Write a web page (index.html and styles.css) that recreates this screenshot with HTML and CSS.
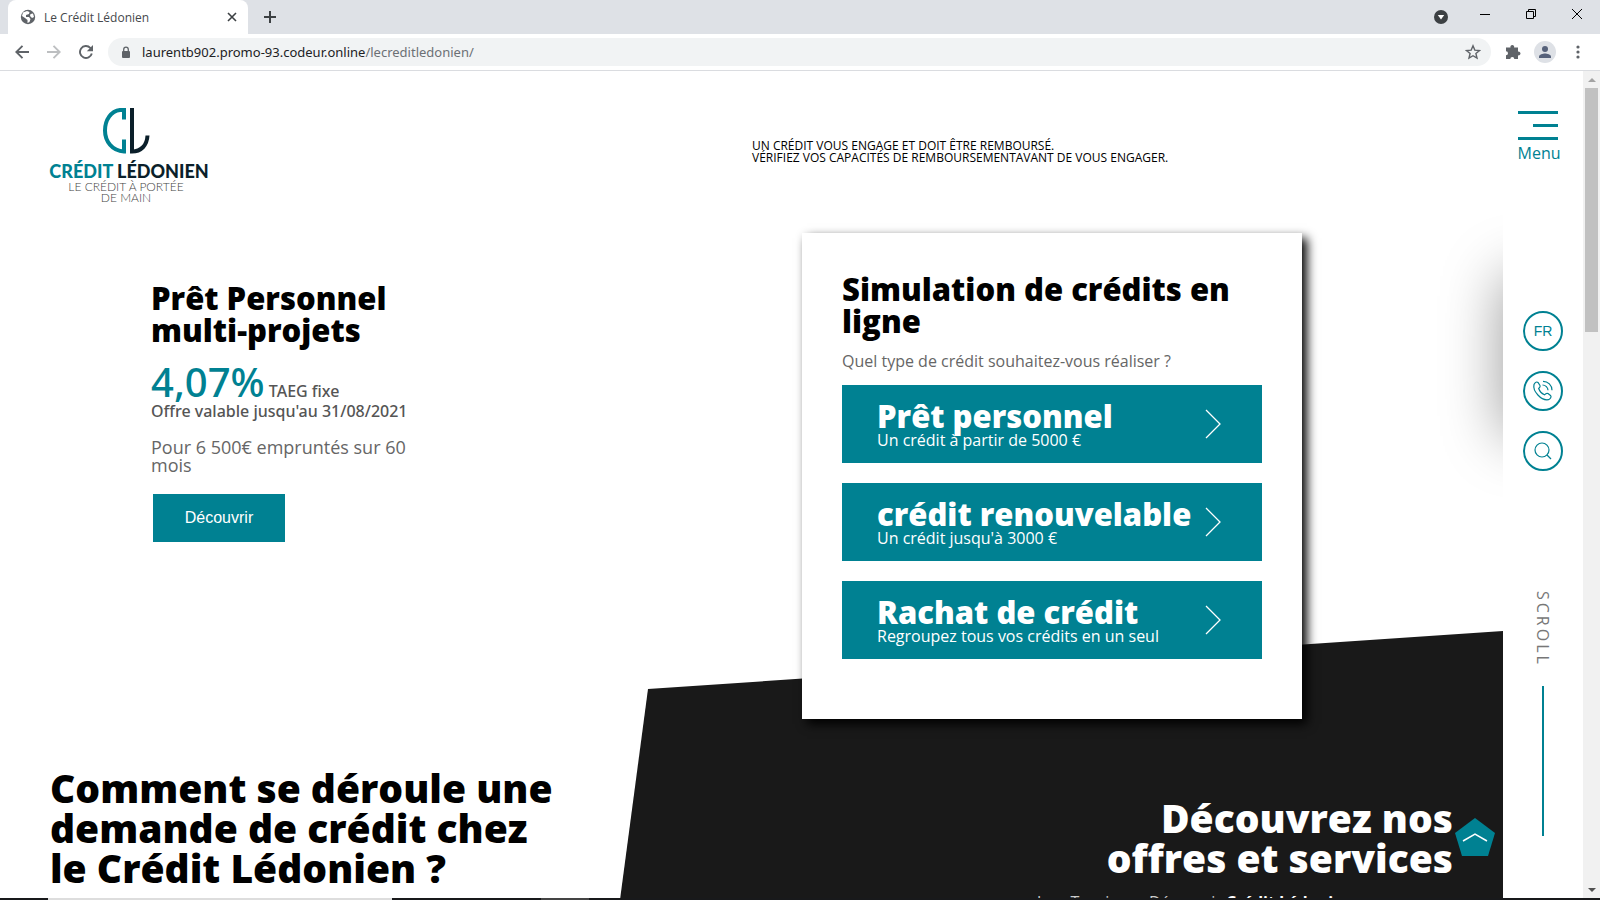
FILE: index.html
```html
<!DOCTYPE html>
<html lang="fr">
<head>
<meta charset="utf-8">
<title>Le Crédit Lédonien</title>
<link rel="stylesheet" href="styles.css">
</head>
<body>
<div class="browser">
  <header class="tabs">
    <div class="tab">
      <svg class="globe" viewBox="0 0 16 16"><circle cx="8" cy="8" r="7.2" fill="#5f6368"/><path d="M3 3.500 7 2l2.500 1-.5 2-3 1v2l3 0 1.500 2-1 3-2 1v-3L5 9 2 7z" fill="#fff"/><path d="M10.500 5l2.500-.5 1 3.500-2 1-2-2z" fill="#fff"/></svg>
      <span class="tab-title">Le Crédit Lédonien</span>
      <button class="plain" aria-label="Fermer l'onglet"><svg width="10" height="10" viewBox="0 0 10 10"><path d="M1 1l8 8M9 1l-8 8" stroke="#3c4043" stroke-width="1.600"/></svg></button>
    </div>
    <button class="plain new-tab" aria-label="Nouvel onglet"><svg width="12" height="12" viewBox="0 0 12 12"><path d="M6 0v12M0 6h12" stroke="#3c4043" stroke-width="2"/></svg></button>
    <div class="window-buttons">
      <button class="plain" aria-label="Rechercher les onglets"><svg width="14" height="14" viewBox="0 0 14 14"><circle cx="7" cy="7" r="7" fill="#3c4043"/><path d="M3.800 5h6.400L7 9.500z" fill="#fff"/></svg></button>
      <button class="plain" aria-label="Réduire"><svg width="10" height="10" viewBox="0 0 10 10"><path d="M0 5.500h10" stroke="#000"/></svg></button>
      <button class="plain" aria-label="Restaurer"><svg width="10" height="10" viewBox="0 0 10 10" fill="none" stroke="#000"><path d="M.5 2.500h7v7h-7zM2.500 2.500v-2h7v7h-2"/></svg></button>
      <button class="plain" aria-label="Fermer"><svg width="10" height="10" viewBox="0 0 10 10"><path d="M0 0l10 10M10 0L0 10" stroke="#000"/></svg></button>
    </div>
  </header>
  <div class="toolbar">
    <button class="plain" aria-label="Retour"><svg width="14" height="14" viewBox="0 0 14 14" fill="none" stroke="#5f6368" stroke-width="1.900"><path d="M14 7H1.500M7.500.8 1.300 7l6.200 6.200"/></svg></button>
    <button class="plain" aria-label="Avancer"><svg width="14" height="14" viewBox="0 0 14 14" fill="none" stroke="#bdbfc1" stroke-width="1.900"><path d="M0 7h12.500M6.500.8 12.700 7l-6.200 6.200"/></svg></button>
    <button class="plain" aria-label="Actualiser"><svg width="14" height="14" viewBox="0 0 14 14"><path d="M12.800 8.500A6 6 0 1 1 11.300 2.800l1 1" fill="none" stroke="#5f6368" stroke-width="1.900"/><path d="M14 0v6.200H7.800z" fill="#5f6368"/></svg></button>
    <div class="address">
      <svg width="10" height="13" viewBox="0 0 10 13"><rect x="1" y="5" width="8" height="7" rx="1" fill="#5f6368"/><path d="M2.700 6V3.500a2.300 2.300 0 0 1 4.600 0V6" fill="none" stroke="#5f6368" stroke-width="1.300"/></svg>
      <span class="url">laurentb902.promo-93.codeur.online<span class="path">/lecreditledonien/</span></span>
      <button class="plain" aria-label="Ajouter aux favoris"><svg width="16" height="16" viewBox="0 0 16 16"><path d="M8 1.800l1.800 4.300 4.700.4-3.600 3 1.100 4.600L8 11.700l-4 2.400 1.100-4.600-3.600-3 4.700-.4z" fill="none" stroke="#5f6368" stroke-width="1.400"/></svg></button>
    </div>
    <button class="plain" aria-label="Extensions"><svg width="16" height="16" viewBox="0 0 16 16"><path d="M1 3.500h4.500a1.900 1.900 0 1 1 3.600 0H13v4.200a1.900 1.900 0 1 1 0 3.600V15H9.300a2 2 0 0 0-4 0H1v-3.700a2 2 0 0 0 0-4z" fill="#5f6368"/></svg></button>
    <button class="plain avatar" aria-label="Profil"><svg width="22" height="22" viewBox="0 0 22 22"><circle cx="11" cy="11" r="11" fill="#dee1e6"/><circle cx="11" cy="8" r="3" fill="#56617a"/><path d="M5 17v-1.500c0-2 4-3 6-3s6 1 6 3V17z" fill="#56617a"/></svg></button>
    <button class="plain" aria-label="Menu du navigateur"><svg width="4" height="14" viewBox="0 0 4 14" fill="#5f6368"><circle cx="2" cy="2" r="1.600"/><circle cx="2" cy="7" r="1.600"/><circle cx="2" cy="12" r="1.600"/></svg></button>
  </div>
  <div class="viewport">
    <main class="page">
      <div class="top">
        <a class="logo" href="#" aria-label="Crédit Lédonien">
          <svg width="48" height="46" viewBox="0 0 48 46" fill="none" stroke-width="4"><path d="M22 11.500V2H18C9 3 3 12 3 22.500S10 43 22 43.500V31.500" stroke="#008192"/><path d="M30 0v43.500c9 0 15-6 15.500-16" stroke="#0b1f2a"/></svg>
          <span class="logo-name"><span class="teal">CRÉDIT</span> LÉDONIEN</span>
          <span class="logo-tag">LE CRÉDIT À PORTÉE<br>DE MAIN</span>
        </a>
        <p class="legal">UN CRÉDIT VOUS ENGAGE ET DOIT ÊTRE REMBOURSÉ.<br>VÉRIFIEZ VOS CAPACITÉS DE REMBOURSEMENTAVANT DE VOUS ENGAGER.</p>
      </div>
      <div class="hero">
        <section class="offer">
          <h2>Prêt Personnel<br>multi-projets</h2>
          <p class="rate"><span class="percent">4,07%</span> TAEG fixe<br>Offre valable jusqu'au 31/08/2021</p>
          <p class="amount">Pour 6 500€ empruntés sur 60 mois</p>
          <button class="discover">Découvrir</button>
        </section>
        <section class="card">
          <h2>Simulation de crédits en ligne</h2>
          <p class="question">Quel type de crédit souhaitez-vous réaliser ?</p>
          <div class="choices">
            <a class="choice" href="#"><span><strong>Prêt personnel</strong>Un crédit à partir de 5000 €</span><svg width="16" height="30" viewBox="0 0 16 30"><path d="M1 1l14 14L1 29"/></svg></a>
            <a class="choice" href="#"><span><strong>crédit renouvelable</strong>Un crédit jusqu'à 3000 €</span><svg width="16" height="30" viewBox="0 0 16 30"><path d="M1 1l14 14L1 29"/></svg></a>
            <a class="choice" href="#"><span><strong>Rachat de crédit</strong>Regroupez tous vos crédits en un seul</span><svg width="16" height="30" viewBox="0 0 16 30"><path d="M1 1l14 14L1 29"/></svg></a>
          </div>
        </section>
      </div>
      <div class="below">
        <h1>Comment se déroule une<br>demande de crédit chez<br>le Crédit Lédonien ?</h1>
        <section class="services">
          <h1>Découvrez nos<br>offres et services</h1>
          <p>Jura Tourisme, Découvrir <b>Crédit Lédonien</b></p>
        </section>
      </div>
      <a class="to-top" href="#" aria-label="Haut de page"><svg width="40" height="40" viewBox="0 0 40 40"><path d="M20 0l20 15-7 23H7L0 15z" fill="#008192"/><path d="M8 23l12-7 12 7" fill="none" stroke="#fff" stroke-width="1.500"/></svg></a>
    </main>
    <aside class="rail">
      <button class="plain menu"><svg width="40" height="29" viewBox="0 0 40 29"><path d="M0 1.500h40M15 14.500h25M0 27.500h40" stroke="#008192" stroke-width="3"/></svg><span>Menu</span></button>
      <div class="rounds">
        <button class="round">FR</button>
        <button class="round" aria-label="Appeler"><svg width="22" height="22" viewBox="0 0 22 22"><path d="M2 4.500C3 2 5 1.500 6 2.500l2 3c.6 1-.2 2-1.300 3 .8 2.500 3 5 5.800 6.300 1.500-1.600 2.300-2 3.500-1.200l2.500 1.800c1.300 1.200 0 3.500-2 4.300C9 21 .5 11 2 4.500zM10.500 5c3 0 5.500 2.500 5.500 5.300M11 1.300c5 0 9 4 9 9"/></svg></button>
        <button class="round" aria-label="Rechercher"><svg width="18" height="18" viewBox="0 0 18 18"><circle cx="8" cy="8" r="7"/><path d="M13 13l4 4"/></svg></button>
      </div>
      <div class="scroll"><span>SCROLL</span><i></i></div>
    </aside>
    <div class="scrollbar"><i class="arrow up"></i><i class="thumb"></i><i class="arrow down"></i></div>
  </div>
  <div class="taskbar"><i class="active"></i><i class="open"></i></div>
</div>
</body>
</html>
```
FILE: styles.css
```css
* { box-sizing: border-box; }
html { height: 100%; }
body { margin: 0; height: 100%; font: 16px "Open Sans", sans-serif; color: #000; background: #fff; overflow: hidden; }
h1, h2, p { margin: 0; }
a { color: inherit; text-decoration: none; }
svg { display: block; flex: none; }
h1, h2, strong { font-family: "Open Sans", sans-serif; font-weight: 800; }
.plain { border: 0; padding: 0; margin: 0; background: none; color: inherit; font: inherit; flex: none; }
.browser { height: 100%; display: flex; flex-direction: column; }

.tabs { height: 34px; flex: none; background: #dee1e6; display: flex; align-items: center; padding-left: 8px; }
.tab { width: 240px; height: 34px; background: #fff; border-radius: 8px 8px 0 0; display: flex; align-items: center; gap: 8px; padding: 0 11px 0 12px; }
.globe { width: 16px; height: 16px; }
.tab-title { flex: 1; font: 12px "Open Sans", sans-serif; color: #45484c; }
.new-tab { margin-left: 16px; }
.window-buttons { margin-left: auto; display: flex; align-items: center; gap: 36px; padding: 0 18px 6px 0; }
.window-buttons button:first-child { margin: 5px -4px 0 0; }

.toolbar { height: 37px; flex: none; border-bottom: 1px solid #dadce0; display: flex; align-items: center; padding: 0 20px 0 15px; gap: 18px; }
.address { flex: 1; height: 28px; border-radius: 14px; background: #f1f3f4; display: flex; align-items: center; gap: 11px; padding: 0 10px 0 13px; margin-left: -3px; margin-right: -4px; }
.url { flex: 1; font: 13px "Noto Sans", sans-serif; color: #202124; }
.path { color: #6c7075; }
.toolbar .avatar { margin: 0 2px 0 -5px; }

.viewport { flex: 1; min-height: 0; display: flex; }
.page { flex: 1; min-width: 0; position: relative; overflow: hidden; }
.page::after { content: ""; position: absolute; left: 100%; top: 205px; width: 80px; height: 160px; box-shadow: 0 0 60px #0006; }
.top { display: flex; padding: 37px 46px 0; height: 162px; }
.logo { width: 166px; display: flex; flex-direction: column; align-items: center; color: #0b1f2a; }
.logo svg, .logo-tag { margin-right: 6px; }
.logo-name { font: 900 18px/20px Lato, sans-serif; margin-top: 7px; white-space: nowrap; }
.teal { color: #008192; }
.logo-tag { font: 300 12px/11px Lato, sans-serif; text-align: center; color: #444; white-space: nowrap; }
.legal { font-size: 12px; line-height: 12px; margin: 32px 0 0 auto; width: 705px; }
.hero { display: flex; justify-content: space-between; padding: 0 201px 0 151px; align-items: flex-start; position: relative; z-index: 1; }
.offer { width: 275px; padding-top: 49px; color: #555; }
h2 { font-size: 31px; line-height: 32px; color: #000; }
.rate { margin-top: 16px; font: 500 16px/18px "Noto Sans", sans-serif; white-space: nowrap; }
.percent { font-size: 40px; line-height: 40px; color: #008192; }
.amount { margin-top: 18px; font-size: 18px; line-height: 18px; color: #666; }
.discover { margin: 20px 2px; width: 132px; height: 48px; border: 0; background: #008192; color: #fff; font: 16px "Liberation Sans", sans-serif; }
.card { width: 500px; padding: 40px 40px 60px; background: #fff; box-shadow: 5px 5px 10px #000; }
.question { margin-top: 12px; line-height: 24px; color: #666; }
.choices { display: grid; gap: 20px; margin-top: 12px; }
.choice { height: 78px; padding: 0 41px 0 35px; background: #008192; color: #fff; display: flex; align-items: center; justify-content: space-between; line-height: 16px; }
.choice strong { display: block; font-size: 31px; line-height: 32px; white-space: nowrap; }
.choice path { fill: none; stroke: #fff; stroke-width: 1.300; }
.below { display: flex; margin-top: -88px; }
.below h1 { font-size: 39px; line-height: 40px; white-space: nowrap; }
.below > h1 { padding: 137px 0 0 50px; width: 620px; flex: none; }
.services { flex: 1; height: 600px; margin-left: -60px; padding: 167px 50px 0 0; background: #191919; color: #fff; text-align: right; clip-path: polygon(88px 58px, 100% 0, 100% 100%, 16px 100%); }
.services p { margin-top: 12px; padding-right: 100px; line-height: 24px; color: #ccc; }
.services b { color: #fff; }
.to-top { position: absolute; right: 8px; bottom: 40px; z-index: 2; }

.rail { width: 80px; flex: none; display: flex; flex-direction: column; align-items: center; padding-top: 40px; color: #008192; }
.menu { display: flex; flex-direction: column; gap: 1px; line-height: 24px; margin-right: 8px; }
.rounds { margin-top: 146px; display: grid; gap: 20px; }
.round { width: 40px; height: 40px; border: 2px solid #008192; border-radius: 50%; background: #fff; color: #008192; font: 14px "Liberation Sans", sans-serif; display: grid; place-items: center; padding: 0; }
.round svg { fill: none; stroke: #008192; stroke-width: 1.200; }
.scroll { margin-top: 120px; display: flex; flex-direction: column; align-items: center; gap: 19px; }
.scroll span { writing-mode: vertical-rl; font-size: 16px; line-height: 20px; letter-spacing: 3px; color: #777; }
.scroll i { width: 2px; height: 150px; background: #008192; }

.scrollbar { width: 17px; flex: none; background: #f1f1f1; display: flex; flex-direction: column; align-items: center; }
.arrow { border: 4px solid transparent; }
.up { border-top: 0; border-bottom-color: #a3a3a3; margin: 7px 0 6px; }
.thumb { width: 13px; height: 244px; background: #c1c1c1; }
.down { border-bottom: 0; border-top-color: #505050; margin: auto 0 6px; }
.taskbar { height: 2px; flex: none; background: #18191b; display: flex; padding-left: 48px; gap: 149px; }
.active { width: 344px; background: #ddd; }
.open { width: 48px; background: #444; }
```
